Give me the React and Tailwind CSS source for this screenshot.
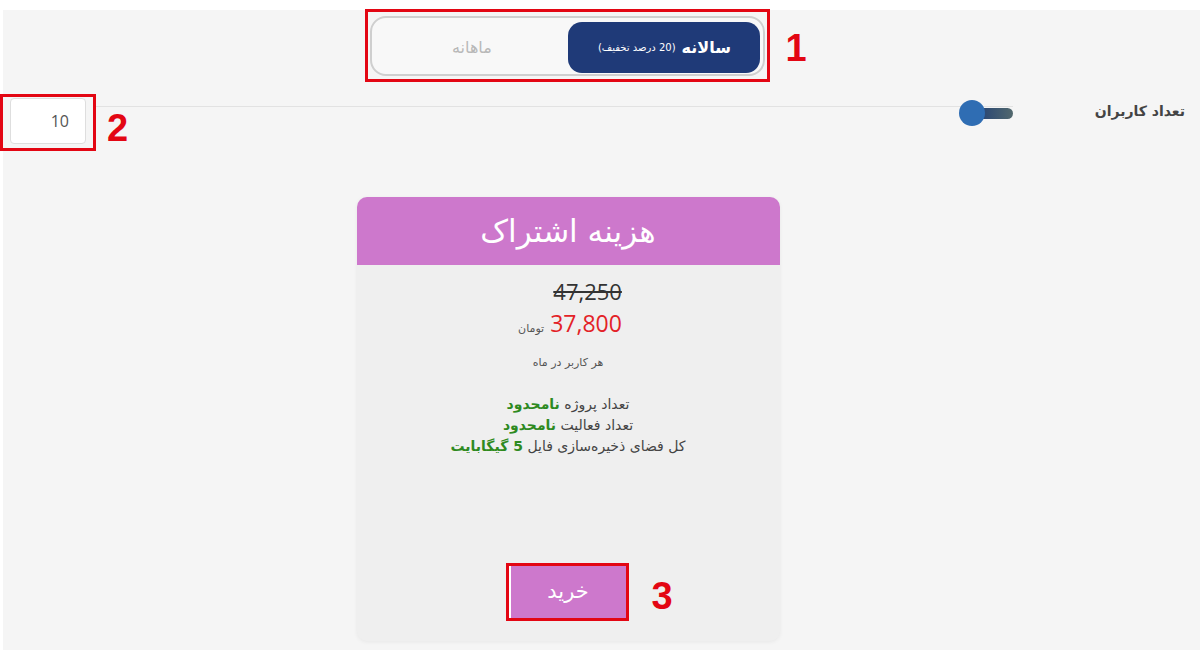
import React from "react";

const fa = { fontFamily: '"DejaVu Sans", sans-serif' };

function Marker({ n }) {
  return (
    <span className="text-[38px] leading-none font-bold text-[#e30613] font-['Liberation_Sans',sans-serif]">
      {n}
    </span>
  );
}

function PlanToggle() {
  return (
    <div className="flex items-center -mt-px">
      <div className="border-[3px] border-[#e30613] pl-[2px] pr-[2px] pt-[4px] pb-[3px]">
        <div className="flex w-[395px] h-[60px] rounded-[16px] border-2 border-[#cfcfcf] bg-[#f8f8f8] p-[3px] pt-[4px] pb-[1px]">
          <button className="flex-1 text-[16px] text-[#b8b8b8]" dir="rtl" style={fa}>
            ماهانه
          </button>
          <button
            className="w-[192px] rounded-[14px] bg-[#1f3a78] text-white flex items-center justify-center gap-[6px]"
            dir="rtl"
            style={fa}
          >
            <span className="text-[16px] font-bold">سالانه</span>
            <span className="text-[10px]">(20 درصد تخفیف)</span>
          </button>
        </div>
      </div>
      <div className="ml-[15px] mt-[4px]">
        <Marker n="1" />
      </div>
    </div>
  );
}

function UsersSlider() {
  return (
    <div className="flex items-start mt-[12px]">
      <div className="border-[3px] border-[#e30613] px-[7px] pt-px pb-[4px] -ml-[3px]">
        <input
          type="text"
          defaultValue="10"
          className="w-[76px] h-[46px] rounded-[4px] border border-[#dedede] bg-white text-right pr-[16px] text-[16px] text-[#555] font-['Open_Sans',sans-serif] outline-none"
        />
      </div>
      <div className="flex-1 border-t border-[#e2e2e2] mt-[12px] flex items-start">
        <div className="mt-[2px] ml-[11px]">
          <Marker n="2" />
        </div>
        <div className="ml-auto flex items-center -mt-[7px]">
          <div className="relative z-10 w-[26px] h-[26px] rounded-full bg-[#2f6db3]" />
          <div className="-ml-[13px] w-[41px] h-[11px] rounded-full bg-gradient-to-r from-[#1f3b74] to-[#52686d]" />
        </div>
      </div>
      <div className="w-[187px] pr-[15px] pt-[4px] text-right">
        <span className="text-[14px] font-bold text-[#444]" dir="rtl" style={fa}>
          تعداد کاربران
        </span>
      </div>
    </div>
  );
}

function PriceCard() {
  return (
    <div className="mt-[46px] flex items-start">
      <div className="w-[423px] h-[444px] rounded-[10px] bg-[#efefef] shadow-[0_1px_4px_rgba(0,0,0,0.06)] flex flex-col overflow-hidden">
        <div className="h-[68px] bg-[#cd78cc] flex items-center justify-center">
          <span className="text-[31px] text-white" dir="rtl" style={fa}>
            هزینه اشتراک
          </span>
        </div>
        <div className="flex-1 flex flex-col items-center pt-[12px]">
          <div className="flex flex-col items-end pl-[4px]">
            <span className="text-[22px] text-[#333] line-through leading-[28px] font-['Open_Sans',sans-serif]">
              47,250
            </span>
            <div className="flex items-baseline gap-[6px] mt-[4px]">
              <span className="text-[11px] text-[#555]" style={fa}>تومان</span>
              <span className="text-[23px] text-[#e32227] leading-[28px] font-['Open_Sans',sans-serif]">
                37,800
              </span>
            </div>
          </div>
          <p className="mt-[17px] text-[11px] text-[#555]" dir="rtl" style={fa}>
            هر کاربر در ماه
          </p>
          <div className="mt-[23px] text-[14px] leading-[21px] text-[#444] text-center" dir="rtl" style={fa}>
            <p>
              تعداد پروژه <b className="text-[#2e8a1f]">نامحدود</b>
            </p>
            <p>
              تعداد فعالیت <b className="text-[#2e8a1f]">نامحدود</b>
            </p>
            <p>
              کل فضای ذخیره‌سازی فایل <b className="text-[#2e8a1f]">5 گیگابایت</b>
            </p>
          </div>
          <div className="mt-auto mb-[20px] mr-[2px] flex items-center">
            <div className="border-[3px] border-[#e30613]">
              <button className="w-[117px] h-[52px] bg-[#cd78cc] text-white text-[21px] border-l-2 border-white" style={fa}>
                خرید
              </button>
            </div>
          </div>
        </div>
      </div>
      <div className="relative w-0">
        <div className="absolute left-[-128px] top-[380px]">
          <Marker n="3" />
        </div>
      </div>
    </div>
  );
}

export default function App() {
  return (
    <div className="w-[1200px] h-[652px] bg-white pt-[10px] overflow-hidden">
      <div className="ml-[3px] h-[640px] bg-[#f5f5f5] flex flex-col">
        <div className="flex justify-center pr-[67px]">
          <div className="ml-[36px]">
            <PlanToggle />
          </div>
        </div>
        <UsersSlider />
        <div className="flex justify-center pr-[67px]">
          <PriceCard />
        </div>
      </div>
    </div>
  );
}
